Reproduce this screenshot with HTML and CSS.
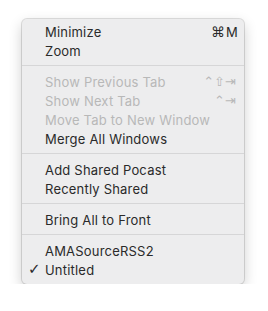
FILE: index.html
```html
<!DOCTYPE html>
<html>
<head>
<meta charset="utf-8">
<link rel="stylesheet" href="styles.css">
</head>
<body>
<div class="menu">
  <div class="item"><span class="check"></span><span class="label">Minimize</span><span class="sc"><span class="mods cmd">⌘</span><span class="key letter">M</span></span></div>
  <div class="item"><span class="check"></span><span class="label">Zoom</span></div>
  <div class="sep"></div>
  <div class="item disabled"><span class="check"></span><span class="label">Show Previous Tab</span><span class="sc"><span class="mods">⌃⇧</span><span class="key">⇥</span></span></div>
  <div class="item disabled"><span class="check"></span><span class="label">Show Next Tab</span><span class="sc"><span class="mods">⌃</span><span class="key">⇥</span></span></div>
  <div class="item disabled"><span class="check"></span><span class="label">Move Tab to New Window</span></div>
  <div class="item"><span class="check"></span><span class="label">Merge All Windows</span></div>
  <div class="sep"></div>
  <div class="item"><span class="check"></span><span class="label">Add Shared Pocast</span></div>
  <div class="item"><span class="check"></span><span class="label">Recently Shared</span></div>
  <div class="sep"></div>
  <div class="item"><span class="check"></span><span class="label">Bring All to Front</span></div>
  <div class="sep"></div>
  <div class="item"><span class="check"></span><span class="label">AMASourceRSS2</span></div>
  <div class="item"><span class="check">✓</span><span class="label">Untitled</span></div>
</div>
</body>
</html>
```
FILE: styles.css
```css
html, body {
  margin: 0;
  padding: 0;
  background: #ffffff;
}
body {
  padding: 19px 0 0 22px;
  font-family: Inter, "Noto Sans", sans-serif;
  font-size: 13px;
  color: #2a2a2a;
}
.menu {
  width: 222px;
  height: 265px;
  box-sizing: border-box;
  padding: 3px 0 5px;
  background: #ededee;
  border-radius: 5px;
  box-shadow: 0 0 0 1px rgba(0, 0, 0, 0.12), 0 5px 14px rgba(0, 0, 0, 0.2);
  display: flex;
  flex-direction: column;
}
.item {
  height: 19px;
  display: flex;
  align-items: center;
  padding: 0 6px 0 6px;
}
.check {
  width: 17px;
  font-family: "DejaVu Sans", sans-serif;
  font-size: 15px;
  font-weight: bold;
  line-height: 19px;
  color: #2a2a2a;
}
.label {
  flex: 1;
  letter-spacing: 0.2px;
}
.disabled .label, .disabled .sc {
  color: #b8b8b8;
}
.sc {
  display: flex;
  align-items: center;
  font-family: "DejaVu Sans", sans-serif;
}
.mods {
  text-align: right;
}
.cmd {
  font-size: 14px;
  margin-right: 1px;
}
.key {
  width: 13px;
  text-align: left;
}
.letter {
  font-family: Inter, sans-serif;
  width: 12px;
}
.sep {
  height: 1px;
  background: #d6d6d7;
  margin: 5px 0 6px;
}
```
